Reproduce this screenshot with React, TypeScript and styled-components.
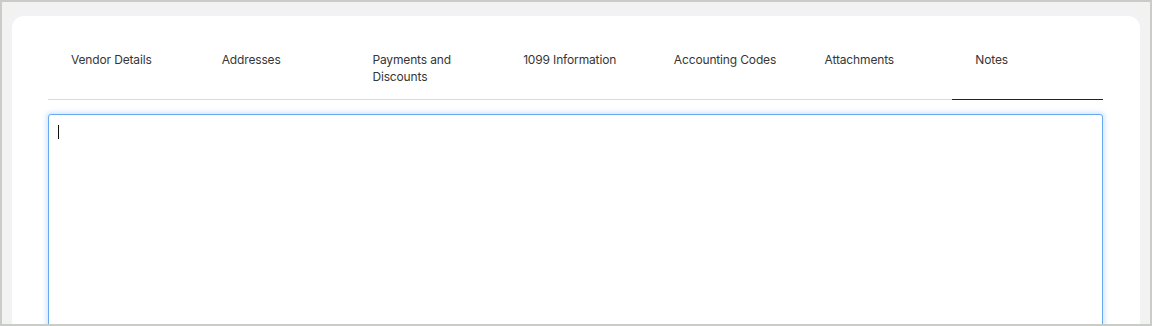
import { useState } from 'react';
import styled, { createGlobalStyle } from 'styled-components';

const GlobalStyle = createGlobalStyle`
  html, body {
    margin: 0;
    padding: 0;
    background: #f2f2f2;
  }
  * {
    box-sizing: border-box;
  }
`;

const Frame = styled.div`
  width: 1152px;
  height: 326px;
  overflow: hidden;
  border: 2px solid #c9ccc7;
  background: #f2f2f2;
  padding: 14px 10px 0;
  font-family: Inter, 'Liberation Sans', sans-serif;
`;

const Card = styled.div`
  background: #ffffff;
  border-radius: 12px 12px 0 0;
  padding: 24px 37px 0 36px;
  height: 400px;
`;

const TabList = styled.div`
  display: grid;
  grid-template-columns: repeat(7, 1fr);
  border-bottom: 1px solid #dadada;
`;

const Tab = styled.button<{ isActive?: boolean }>`
  appearance: none;
  background: none;
  border: none;
  outline: none;
  cursor: pointer;
  display: flex;
  align-items: flex-start;
  text-align: left;
  font-family: inherit;
  font-size: 12px;
  letter-spacing: -0.15px;
  line-height: 17px;
  font-weight: 400;
  color: #363636;
  padding: 11px 23px 14px 23px;
  height: 60px;
  margin-bottom: -1px;
  border-bottom: 1px solid ${({ isActive }) => (isActive ? '#222222' : 'transparent')};
`;

const Editor = styled.div`
  position: relative;
  margin-top: 14px;
`;

const NotesArea = styled.textarea`
  display: block;
  width: 100%;
  height: 260px;
  resize: none;
  border: 1px solid #63aaf1;
  border-radius: 3px;
  box-shadow: 0 0 4px 2px rgba(99, 170, 241, 0.28);
  outline: none;
  padding: 9px 9px;
  font-family: inherit;
  font-size: 12px;
  line-height: 17px;
  color: #222222;
  caret-color: transparent;
`;

const Caret = styled.span`
  position: absolute;
  left: 10px;
  top: 11px;
  width: 1px;
  height: 14px;
  background: #111111;
  pointer-events: none;
`;

const tabs = [
  'Vendor Details',
  'Addresses',
  'Payments and Discounts',
  '1099 Information',
  'Accounting Codes',
  'Attachments',
  'Notes',
];

export default function App() {
  const [active, setActive] = useState('Notes');
  const [notes, setNotes] = useState('');

  return (
    <>
      <GlobalStyle />
      <Frame>
        <Card>
          <TabList>
            {tabs.map((t) => (
              <Tab key={t} isActive={t === active} onClick={() => setActive(t)}>
                {t}
              </Tab>
            ))}
          </TabList>
          <Editor>
            <NotesArea value={notes} onChange={(e) => setNotes(e.target.value)} />
            {notes === '' && <Caret />}
          </Editor>
        </Card>
      </Frame>
    </>
  );
}
